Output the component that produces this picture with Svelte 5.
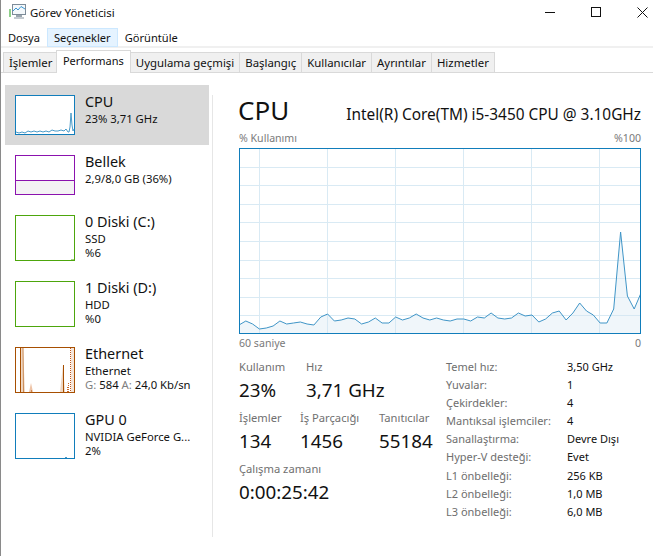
<script lang="ts">
  // y of each sample in the big chart, px from the top of the plot
  const cpuLine = [
    177, 173, 176, 181, 180, 178, 173, 176, 175, 174, 176, 177, 169, 166, 173, 172,
    170, 171, 176, 174, 170, 175, 175, 169, 172, 170, 166, 170, 172, 170, 172, 173,
    171, 171, 173, 169, 170, 165, 170, 171, 170, 165, 168, 167, 174, 171, 165, 163,
    172, 165, 155, 163, 167, 175, 175, 161, 84, 148, 161, 145
  ];
  const plotW = 402;
  const plotH = 186;
  const stepX = plotW / (cpuLine.length - 1);
  const linePts = cpuLine.map((y, i) => `${(i * stepX).toFixed(1)},${y}`).join(" ");
  const areaPts = `0,${plotH} ${linePts} ${plotW},${plotH}`;
  const hLines = Array.from({ length: 9 }, (_, i) => ((i + 1) * plotH) / 10);
  const vLines = [20.5, 88.5, 156.5, 224.5, 292.5, 360.5];

  const thumbLine = "1,37 4,38 7,37 10,38 13,36 16,37 19,36 22,37 25,36 28,37 31,36 34,37 37,35 40,36 43,36 46,35 49,36 51,34 53,37 54,37 55,32 56,18 57,30 58,36 59,34";

  const menus = ["Dosya", "Seçenekler", "Görüntüle"];
  const tabs = ["İşlemler", "Performans", "Uygulama geçmişi", "Başlangıç", "Kullanıcılar", "Ayrıntılar", "Hizmetler"];

  const specs = [
    ["Temel hız:", "3,50 GHz"],
    ["Yuvalar:", "1"],
    ["Çekirdekler:", "4"],
    ["Mantıksal işlemciler:", "4"],
    ["Sanallaştırma:", "Devre Dışı"],
    ["Hyper-V desteği:", "Evet"],
    ["L1 önbelleği:", "256 KB"],
    ["L2 önbelleği:", "1,0 MB"],
    ["L3 önbelleği:", "6,0 MB"]
  ];
</script>

<div class="window">
  <header class="titlebar">
    <svg class="app-icon" width="18" height="16" viewBox="0 0 18 16" aria-hidden="true">
      <rect x="3.5" y="0.5" width="13" height="10" fill="#f4f8fb" stroke="#7d8c99" />
      <path d="M4 7 L7 4 L9 6 L12 2.5 L16 5" fill="none" stroke="#3b97d3" />
      <rect x="0" y="5" width="2" height="8" fill="#8fd08a" />
      <rect x="7" y="11" width="6" height="2" fill="#9aa5ae" />
      <rect x="5" y="13" width="10" height="2" fill="#c3cad0" />
    </svg>
    <span class="app-title">Görev Yöneticisi</span>
    <div class="controls">
      <svg width="11" height="11" viewBox="0 0 11 11" aria-hidden="true"><path d="M0 5.5H10" stroke="#111" /></svg>
      <svg width="11" height="11" viewBox="0 0 11 11" aria-hidden="true"><rect x="0.5" y="0.5" width="9" height="9" fill="none" stroke="#111" /></svg>
      <svg width="11" height="11" viewBox="0 0 11 11" aria-hidden="true"><path d="M0.5 0.5L10.5 10.5M10.5 0.5L0.5 10.5" stroke="#111" /></svg>
    </div>
  </header>

  <nav class="menubar">
    {#each menus as item, i}
      <span class="menu-item" class:open={i === 1}>{item}</span>
    {/each}
  </nav>

  <div class="tabstrip">
    {#each tabs as tab, i}
      <span class="tab" class:active={i === 1}>{tab}</span>
    {/each}
  </div>

  <div class="body">
    <aside class="sidebar">
      <div class="res compact selected">
        <svg class="thumb" viewBox="0 0 60 40" aria-hidden="true">
          <rect x="0.5" y="0.5" width="59" height="39" fill="#fff" stroke="#117dbb" />
          <polyline points={thumbLine} fill="none" stroke="#4a9bc9" />
        </svg>
        <div class="res-text">
          <div class="res-name">CPU</div>
          <div>23% 3,71 GHz</div>
        </div>
      </div>

      <div class="res compact">
        <svg class="thumb" viewBox="0 0 60 40" aria-hidden="true">
          <rect x="0.5" y="25" width="59" height="14.5" fill="#f4f2f4" />
          <rect x="0.5" y="0.5" width="59" height="39" fill="none" stroke="#8b12ae" />
          <path d="M0 25.5H60" stroke="#8b12ae" />
        </svg>
        <div class="res-text">
          <div class="res-name">Bellek</div>
          <div>2,9/8,0 GB (36%)</div>
        </div>
      </div>

      <div class="res">
        <svg class="thumb short" viewBox="0 0 60 46" aria-hidden="true">
          <rect x="0.5" y="0.5" width="59" height="45" fill="#fff" stroke="#4da60c" />
          <path d="M56 44.5H59" stroke="#a5d285" />
        </svg>
        <div class="res-text">
          <div class="res-name">0 Diski (C:)</div>
          <div>SSD</div>
          <div>%6</div>
        </div>
      </div>

      <div class="res">
        <svg class="thumb short" viewBox="0 0 60 46" aria-hidden="true">
          <rect x="0.5" y="0.5" width="59" height="45" fill="#fff" stroke="#4da60c" />
        </svg>
        <div class="res-text">
          <div class="res-name">1 Diski (D:)</div>
          <div>HDD</div>
          <div>%0</div>
        </div>
      </div>

      <div class="res">
        <svg class="thumb short" viewBox="0 0 60 46" aria-hidden="true">
          <rect x="0.5" y="0.5" width="59" height="45" fill="#fff" />
          <polygon points="5,1 8,1 10,45 5,45" fill="#f0d8c4" />
          <path d="M5.5 1V45" stroke="#a74f01" />
          <path d="M8 1L8.5 45" stroke="#c98a55" />
          <polygon points="14,45 16,36 18,45" fill="#eec3a6" />
          <path d="M16 44H17" stroke="#a74f01" />
          <polygon points="45,45 48,18 50,45" fill="#eed6c2" />
          <path d="M48.5 18V45" stroke="#a74f01" />
          <path d="M53.5 36V45M52.5 40V45" stroke="#c8682a" stroke-dasharray="1 1" />
          <polygon points="56,1 59,1 59,45 56,45" fill="#f5e6da" />
          <path d="M55.5 1V45" stroke="#c0561a" stroke-dasharray="1 1" />
          <rect x="0.5" y="0.5" width="59" height="45" fill="none" stroke="#a74f01" />
        </svg>
        <div class="res-text">
          <div class="res-name">Ethernet</div>
          <div>Ethernet</div>
          <div><span class="muted">G:</span> 584 <span class="muted">A:</span> 24,0 Kb/sn</div>
        </div>
      </div>

      <div class="res">
        <svg class="thumb short" viewBox="0 0 60 46" aria-hidden="true">
          <rect x="0.5" y="0.5" width="59" height="45" fill="#fff" stroke="#117dbb" />
          <path d="M50 44.5H52" stroke="#4a9bc9" />
        </svg>
        <div class="res-text">
          <div class="res-name">GPU 0</div>
          <div>NVIDIA GeForce G...</div>
          <div>2%</div>
        </div>
      </div>
    </aside>

    <main class="detail">
      <div class="detail-head">
        <h1>CPU</h1>
        <span class="cpu-model">Intel(R) Core(TM) i5-3450 CPU @ 3.10GHz</span>
      </div>

      <div class="axis top"><span>% Kullanımı</span><span>%100</span></div>
      <svg class="plot" width={plotW} height={plotH} viewBox="0 0 {plotW} {plotH}" aria-hidden="true">
        <rect width={plotW} height={plotH} fill="#fff" />
        {#each hLines as y}
          <line x1="0" x2={plotW} y1={Math.round(y) + 0.5} y2={Math.round(y) + 0.5} stroke="#d9eaf4" />
        {/each}
        {#each vLines as x}
          <line x1={x} x2={x} y1="0" y2={plotH} stroke="#d9eaf4" />
        {/each}
        <polygon points={areaPts} fill="#d3e4f0" fill-opacity="0.35" />
        <polyline points={linePts} fill="none" stroke="#3f95c7" stroke-width="1" />
        <rect x="0.5" y="0.5" width={plotW - 1} height={plotH - 1} fill="none" stroke="#117dbb" />
      </svg>
      <div class="axis bottom"><span>60 saniye</span><span>0</span></div>

      <div class="stats">
        <div class="live">
          <div class="row two">
            <div class="stat"><span class="label">Kullanım</span><b>23%</b></div>
            <div class="stat"><span class="label">Hız</span><b>3,71 GHz</b></div>
          </div>
          <div class="row three">
            <div class="stat"><span class="label">İşlemler</span><b>134</b></div>
            <div class="stat"><span class="label">İş Parçacığı</span><b>1456</b></div>
            <div class="stat"><span class="label">Tanıtıcılar</span><b>55184</b></div>
          </div>
          <div class="stat"><span class="label">Çalışma zamanı</span><b>0:00:25:42</b></div>
        </div>

        <dl class="specs">
          {#each specs as [name, value]}
            <dt>{name}</dt>
            <dd>{value}</dd>
          {/each}
        </dl>
      </div>
    </main>
  </div>
</div>

<style>
  :global(body) {
    background: #fff;
  }

  .window,
  .window * {
    box-sizing: border-box;
  }

  .window {
    width: 653px;
    height: 556px;
    overflow: hidden;
    display: flex;
    flex-direction: column;
    background: #fff;
    color: #111;
    font-family: "Noto Sans", "Open Sans", sans-serif;
    font-size: 11px;
    border-left: 1px solid #8a8a8a;
  }

  .titlebar {
    height: 28px;
    flex: none;
    display: flex;
    align-items: center;
    padding: 0 0 4px 8px;
  }

  .app-title {
    margin-left: 3px;
    font-size: 11.4px;
  }

  .controls {
    margin-left: auto;
    display: flex;
    gap: 35px;
    padding-right: 5px;
  }

  .menubar {
    height: 20px;
    flex: none;
    display: flex;
    align-items: flex-start;
    border-bottom: 2px solid #f0f0f0;
  }

  .menu-item {
    height: 19px;
    padding: 0 6px;
    line-height: 17px;
    font-size: 11.1px;
    border: 1px solid transparent;
    position: relative;
  }

  .menu-item.open {
    background: #e5f3ff;
    border-color: #cce8ff;
  }

  .tabstrip {
    height: 25px;
    flex: none;
    display: flex;
    align-items: flex-end;
    padding-left: 2px;
    border-bottom: 1px solid #d9d9d9;
  }

  .tab {
    height: 20px;
    line-height: 20px;
    padding: 0 5px;
    margin-right: -1px;
    background: #f0f0f0;
    border: 1px solid #d9d9d9;
    border-bottom: 0;
    font-size: 11.4px;
  }

  .tab:first-child {
    padding-right: 3.5px;
  }

  .tab.active {
    height: 23px;
    background: #fff;
    margin-bottom: -1px;
    padding: 0 6px;
    font-size: 11px;
    position: relative;
  }

  .body {
    flex: 1;
    display: flex;
    min-height: 0;
  }

  .sidebar {
    width: 208px;
    margin: 12px 0 19px 4px;
    flex: none;
    display: flex;
    flex-direction: column;
    padding-right: 4px;
    position: relative;
  }

  .sidebar::after {
    content: "";
    position: absolute;
    right: 0;
    top: 10px;
    bottom: 0;
    width: 1px;
    background: #e6e6e6;
  }

  .res {
    width: 204px;
    height: 66px;
    flex: none;
    display: flex;
    gap: 10px;
    padding: 10px 0 0 10px;
    line-height: 14px;
    font-size: 11.3px;
  }

  .res.compact {
    height: 60px;
  }

  .res.selected {
    background: #d9d9d9;
  }

  .thumb {
    width: 60px;
    height: 40px;
    flex: none;
  }

  .thumb.short {
    height: 46px;
  }

  .res-text {
    margin-top: -2px;
    white-space: nowrap;
  }

  .res-name {
    font-size: 14.4px;
    line-height: 17px;
    margin-bottom: 2px;
  }

  .muted {
    color: #808080;
  }

  .detail {
    flex: 1;
    min-width: 0;
    padding: 0 12px 0 26px;
  }

  .detail-head {
    height: 39px;
    margin-top: 19px;
    display: flex;
    align-items: baseline;
    justify-content: space-between;
  }

  h1 {
    margin: 0 0 0 -1px;
    font-size: 26px;
    font-weight: 400;
    line-height: 36px;
  }

  .cpu-model {
    font-size: 15.4px;
    white-space: nowrap;
  }

  .axis {
    display: flex;
    justify-content: space-between;
    width: 402px;
    color: #7a7a7a;
    font-size: 10.6px;
    line-height: 14px;
  }

  .axis.top {
    height: 17px;
  }

  .axis.bottom {
    margin-top: 2px;
  }

  .plot {
    display: block;
  }

  .stats {
    display: flex;
    margin-top: 8px;
  }

  .live {
    width: 207px;
    flex: none;
  }

  .row {
    display: flex;
  }

  .row.two .stat:first-child {
    width: 67px;
  }

  .row.three .stat:nth-child(1) {
    width: 61px;
  }

  .row.three .stat:nth-child(2) {
    width: 79px;
  }

  .stat {
    margin-bottom: 5px;
    white-space: nowrap;
  }

  .label {
    display: block;
    color: #707070;
    font-size: 11.2px;
    line-height: 18px;
  }

  .stat b {
    display: block;
    font-weight: 400;
    font-size: 18.8px;
    line-height: 28px;
  }

  .specs {
    margin: 0;
    display: grid;
    grid-template-columns: 121px auto;
    grid-auto-rows: 18.1px;
    font-size: 11px;
    line-height: 18px;
    white-space: nowrap;
  }

  dt {
    color: #6e6e6e;
  }

  dd {
    margin: 0;
  }
</style>
